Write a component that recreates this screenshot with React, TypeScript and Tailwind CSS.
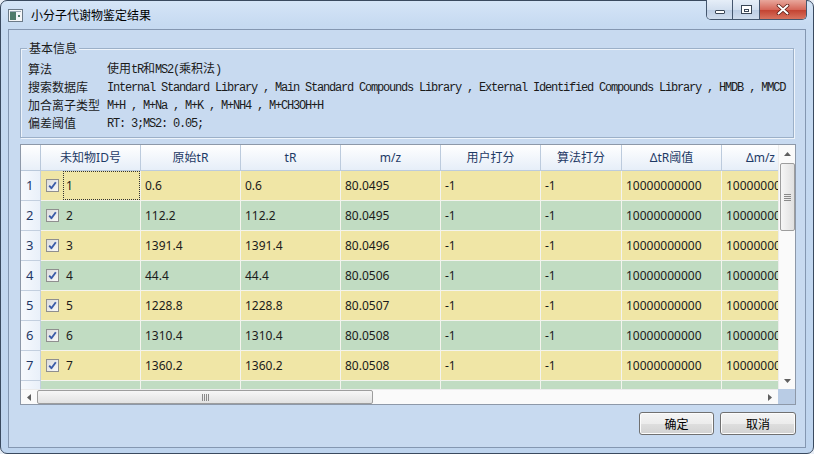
import React from "react";

const rows = [
  ["1", "0.6", "0.6", "80.0495"],
  ["2", "112.2", "112.2", "80.0495"],
  ["3", "1391.4", "1391.4", "80.0496"],
  ["4", "44.4", "44.4", "80.0506"],
  ["5", "1228.8", "1228.8", "80.0507"],
  ["6", "1310.4", "1310.4", "80.0508"],
  ["7", "1360.2", "1360.2", "80.0508"],
];

const headers: { t: string; w: string }[] = [
  { t: "未知物ID号", w: "w-[100px]" },
  { t: "原始tR", w: "w-[100px]" },
  { t: "tR", w: "w-[100px]" },
  { t: "m/z", w: "w-[100px]" },
  { t: "用户打分", w: "w-[100px]" },
  { t: "算法打分", w: "w-[81px]" },
  { t: "ΔtR阈值", w: "w-[100px]" },
  { t: "Δm/z", w: "w-[78px]" },
];

function Mono({ children }: { children: React.ReactNode }) {
  return (
    <span className="font-['Liberation_Mono',monospace] text-[12px] tracking-[-1.2px]">
      {children}
    </span>
  );
}

function Cjk({ children }: { children: React.ReactNode }) {
  return (
    <span className="font-['Noto_Sans_CJK_SC',sans-serif] text-[12px] tracking-normal">
      {children}
    </span>
  );
}

function CheckBox() {
  return (
    <div className="w-[13px] h-[13px] shrink-0 border border-[#8f8f8f] bg-[linear-gradient(135deg,#dcdcdc,#f8f8f8)] flex items-center justify-center">
      <svg width="11" height="11" viewBox="0 0 11 11">
        <path d="M2.2 5.6 L4.4 8.2 L8.8 2.2" fill="none" stroke="#3c5ca8" strokeWidth="1.9" strokeLinejoin="round" />
      </svg>
    </div>
  );
}

function Row({ data, idx }: { data: string[]; idx: number }) {
  const bg = idx % 2 === 0 ? "bg-[#f0e6a6]" : "bg-[#c1dcc2]";
  const cell = "shrink-0 h-full border-r border-b border-[#f4f4ee] flex items-center pl-[4px]";
  return (
    <div className="flex h-[30px]">
      <div className="shrink-0 w-[20px] h-full border-r border-b border-[#c3cfdf] bg-[linear-gradient(90deg,#f6f9fd,#e9f0f9)] flex items-center pl-[5px] text-[13px] text-[#1e3765]">
        {data[0]}
      </div>
      <div className={`${bg} ${cell} w-[100px] pl-[5px]`}>
        <CheckBox />
        {idx === 0 ? (
          <div className="ml-[4px] flex-1 h-full border border-dotted border-[#333] flex items-center pl-[2px]">
            {data[0]}
          </div>
        ) : (
          <div className="ml-[7px]">{data[0]}</div>
        )}
      </div>
      <div className={`${bg} ${cell} w-[100px]`}>{data[1]}</div>
      <div className={`${bg} ${cell} w-[100px]`}>{data[2]}</div>
      <div className={`${bg} ${cell} w-[100px]`}>{data[3]}</div>
      <div className={`${bg} ${cell} w-[100px]`}>-1</div>
      <div className={`${bg} ${cell} w-[81px]`}>-1</div>
      <div className={`${bg} ${cell} w-[100px]`}>10000000000</div>
      <div className={`${bg} ${cell} w-[100px]`}>10000000000</div>
    </div>
  );
}

export default function App() {
  return (
    <div className="w-[814px] h-[454px] overflow-hidden bg-[#e8eef6]">
      <div className="w-[814px] h-[454px] rounded-[7px] border border-[#3a4a5f] bg-[linear-gradient(180deg,#d5e5f7_0px,#c6daf1_24px,#bed4ee_100%)] flex flex-col font-['Noto_Sans','Noto_Sans_CJK_SC',sans-serif] text-[12px] text-[#1b1b1b]">
        {/* title bar */}
        <div className="h-[28px] shrink-0 flex items-start">
          <div className="ml-[7px] mt-[8px]">
            <svg width="15" height="13" viewBox="0 0 15 13">
              <rect x="0.5" y="0.5" width="14" height="12" fill="#f4f6f8" stroke="#6b7a88" />
              <rect x="2" y="3" width="6" height="8" fill="#4f7a6a" />
              <rect x="2" y="2" width="11" height="1" fill="#9aa8b4" />
              <rect x="10" y="6" width="2" height="2" fill="#4f7a6a" />
            </svg>
          </div>
          <div className="ml-[8px] h-[28px] flex items-center text-[12px] text-black font-['Noto_Sans_CJK_SC',sans-serif]">
            小分子代谢物鉴定结果
          </div>
          <div className="ml-auto mr-[6px] -mt-[1px] h-[20px] flex rounded-b-[5px] border border-t-0 border-[#44566e] overflow-hidden">
            <div className="w-[26px] h-full border-r border-[#44566e] bg-[linear-gradient(180deg,#e6eef8,#d2dfef_50%,#bccde4_51%,#cfdced)] flex items-end justify-center pb-[5px]">
              <div className="w-[10px] h-[4px] rounded-[1px] border border-[#3a4656] bg-white" />
            </div>
            <div className="w-[27px] h-full border-r border-[#44566e] bg-[linear-gradient(180deg,#e6eef8,#d2dfef_50%,#bccde4_51%,#cfdced)] flex items-center justify-center">
              <div className="w-[11px] h-[9px] border border-[#3a4656] bg-white flex items-center justify-center">
                <div className="w-[5px] h-[3px] border border-[#3a4656] mt-[1px]" />
              </div>
            </div>
            <div className="w-[46px] h-full bg-[linear-gradient(180deg,#e8a79c,#d5685a_50%,#c2402f_51%,#d8735f)] flex items-center justify-center">
              <svg width="14" height="11" viewBox="0 0 14 11">
                <path d="M2.5 1.5 L11.5 9.5 M11.5 1.5 L2.5 9.5" stroke="#5a1a12" strokeWidth="3.6" strokeLinecap="round" />
                <path d="M2.5 1.5 L11.5 9.5 M11.5 1.5 L2.5 9.5" stroke="#ffffff" strokeWidth="2" strokeLinecap="round" />
              </svg>
            </div>
          </div>
        </div>

        {/* client area */}
        <div className="ml-[7px] w-[798px] h-[419px] shrink-0 border border-[#8497b1] bg-[#c8daf0] flex flex-col">
          {/* group box */}
          <div className="relative ml-[11px] mt-[18px] w-[774px] h-[90px] border border-[#9cb0c8] shadow-[1px_1px_0_#eef4fb,inset_1px_1px_0_#eef4fb] pt-[11px] pl-[7px] font-['Noto_Sans_CJK_SC',sans-serif]">
            <span className="absolute left-[6px] -top-[10px] px-[2px] bg-[#c8daf0] text-[12px] leading-[18px]">
              基本信息
            </span>
            <div className="flex h-[18px] items-center">
              <div className="w-[79px] shrink-0">算法</div>
              <div className="whitespace-nowrap">
                <Cjk>使用</Cjk>
                <Mono>tR</Mono>
                <Cjk>和</Cjk>
                <Mono>MS2(</Mono>
                <Cjk>乘积法</Cjk>
                <Mono>)</Mono>
              </div>
            </div>
            <div className="flex h-[18px] items-center">
              <div className="w-[79px] shrink-0">搜索数据库</div>
              <div className="whitespace-nowrap">
                <Mono>
                  Internal Standard Library , Main Standard Compounds Library , External Identified Compounds Library , HMDB , MMCD
                </Mono>
              </div>
            </div>
            <div className="flex h-[18px] items-center">
              <div className="w-[79px] shrink-0">加合离子类型</div>
              <div className="whitespace-nowrap">
                <Mono>M+H , M+Na , M+K , M+NH4 , M+CH3OH+H</Mono>
              </div>
            </div>
            <div className="flex h-[18px] items-center">
              <div className="w-[79px] shrink-0">偏差阈值</div>
              <div className="whitespace-nowrap">
                <Mono>RT: 3;MS2: 0.05;</Mono>
              </div>
            </div>
          </div>

          {/* grid */}
          <div className="ml-[11px] mt-[6px] w-[776px] h-[261px] border border-[#8d98a8] bg-white flex">
            <div className="w-[757px] flex flex-col">
              <div className="h-[244px] overflow-hidden">
                <div className="flex h-[26px]">
                  <div className="shrink-0 w-[20px] h-full border-r border-b border-[#b9c8da] bg-[linear-gradient(180deg,#ffffff,#e8eff8)]" />
                  {headers.map((h) => (
                    <div
                      key={h.t}
                      className={`shrink-0 ${h.w} h-full border-r border-b border-[#bccbdd] bg-[linear-gradient(180deg,#ffffff,#e6eef8)] flex items-center justify-center text-[12px] text-[#1e3a66] font-['Noto_Sans','Noto_Sans_CJK_SC',sans-serif]`}
                    >
                      {h.t}
                    </div>
                  ))}
                </div>
                {rows.map((r, i) => (
                  <Row key={i} data={r} idx={i} />
                ))}
                <div className="flex h-[30px]">
                  <div className="shrink-0 w-[20px] h-full border-r border-[#c3cfdf] bg-[linear-gradient(90deg,#f6f9fd,#e9f0f9)]" />
                  <div className="shrink-0 w-[100px] h-full bg-[#c1dcc2] border-r border-[#f4f4ee]" />
                  <div className="shrink-0 w-[100px] h-full bg-[#c1dcc2] border-r border-[#f4f4ee]" />
                  <div className="shrink-0 w-[100px] h-full bg-[#c1dcc2] border-r border-[#f4f4ee]" />
                  <div className="shrink-0 w-[100px] h-full bg-[#c1dcc2] border-r border-[#f4f4ee]" />
                  <div className="shrink-0 w-[100px] h-full bg-[#c1dcc2] border-r border-[#f4f4ee]" />
                  <div className="shrink-0 w-[81px] h-full bg-[#c1dcc2] border-r border-[#f4f4ee]" />
                  <div className="shrink-0 w-[100px] h-full bg-[#c1dcc2] border-r border-[#f4f4ee]" />
                  <div className="shrink-0 w-[100px] h-full bg-[#c1dcc2]" />
                </div>
              </div>
              {/* horizontal scrollbar */}
              <div className="h-[15px] bg-[#fafafa] border-t border-[#ececec] flex items-center">
                <div className="w-[16px] h-full flex items-center justify-center">
                  <svg width="4" height="7" viewBox="0 0 4 7">
                    <path d="M4 0 L0 3.5 L4 7Z" fill="#5f5f5f" />
                  </svg>
                </div>
                <div className="w-[336px] h-[14px] rounded-[2px] border border-[#9d9d9d] bg-[linear-gradient(180deg,#f6f6f6,#e2e2e2)] flex items-center justify-center gap-[1px]">
                  <div className="w-[1px] h-[7px] bg-[#8a8a8a]" />
                  <div className="w-[1px] h-[7px] bg-[#8a8a8a]" />
                  <div className="w-[1px] h-[7px] bg-[#8a8a8a]" />
                  <div className="w-[1px] h-[7px] bg-[#8a8a8a]" />
                </div>
                <div className="flex-1" />
                <div className="w-[17px] h-full flex items-center justify-center">
                  <svg width="4" height="7" viewBox="0 0 4 7">
                    <path d="M0 0 L4 3.5 L0 7Z" fill="#5f5f5f" />
                  </svg>
                </div>
              </div>
            </div>
            <div className="w-[17px] flex flex-col">
              {/* vertical scrollbar */}
              <div className="h-[244px] bg-[#fafafa] border-l border-[#ececec] flex flex-col items-center">
                <div className="h-[17px] w-full flex items-center justify-center">
                  <svg width="7" height="4" viewBox="0 0 7 4">
                    <path d="M0 4 L3.5 0 L7 4Z" fill="#5f5f5f" />
                  </svg>
                </div>
                <div className="mt-[1px] w-[15px] h-[68px] rounded-[2px] border border-[#9d9d9d] bg-[linear-gradient(90deg,#f6f6f6,#e0e0e0)] flex flex-col items-center justify-center gap-[1px]">
                  <div className="w-[7px] h-[1px] bg-[#8a8a8a]" />
                  <div className="w-[7px] h-[1px] bg-[#8a8a8a]" />
                  <div className="w-[7px] h-[1px] bg-[#8a8a8a]" />
                  <div className="w-[7px] h-[1px] bg-[#8a8a8a]" />
                </div>
                <div className="flex-1" />
                <div className="h-[17px] w-full flex items-center justify-center">
                  <svg width="7" height="4" viewBox="0 0 7 4">
                    <path d="M0 0 L3.5 4 L7 0Z" fill="#5f5f5f" />
                  </svg>
                </div>
              </div>
              <div className="flex-1 bg-[#b9cce5]" />
            </div>
          </div>

          {/* buttons */}
          <div className="mt-[7px] flex justify-end gap-[6px] pr-[9px] font-['Noto_Sans_CJK_SC',sans-serif]">
            <div className="w-[75px] h-[23px] rounded-[3px] border border-[#707070] bg-[linear-gradient(180deg,#f4f4f4_0%,#ececec_50%,#dedede_51%,#d2d2d2_100%)] shadow-[inset_0_0_0_1px_#fcfcfc] flex items-center justify-center text-[12px] text-black">
              确定
            </div>
            <div className="w-[76px] h-[23px] rounded-[3px] border border-[#707070] bg-[linear-gradient(180deg,#f4f4f4_0%,#ececec_50%,#dedede_51%,#d2d2d2_100%)] shadow-[inset_0_0_0_1px_#fcfcfc] flex items-center justify-center text-[12px] text-black">
              取消
            </div>
          </div>
        </div>
      </div>
    </div>
  );
}
